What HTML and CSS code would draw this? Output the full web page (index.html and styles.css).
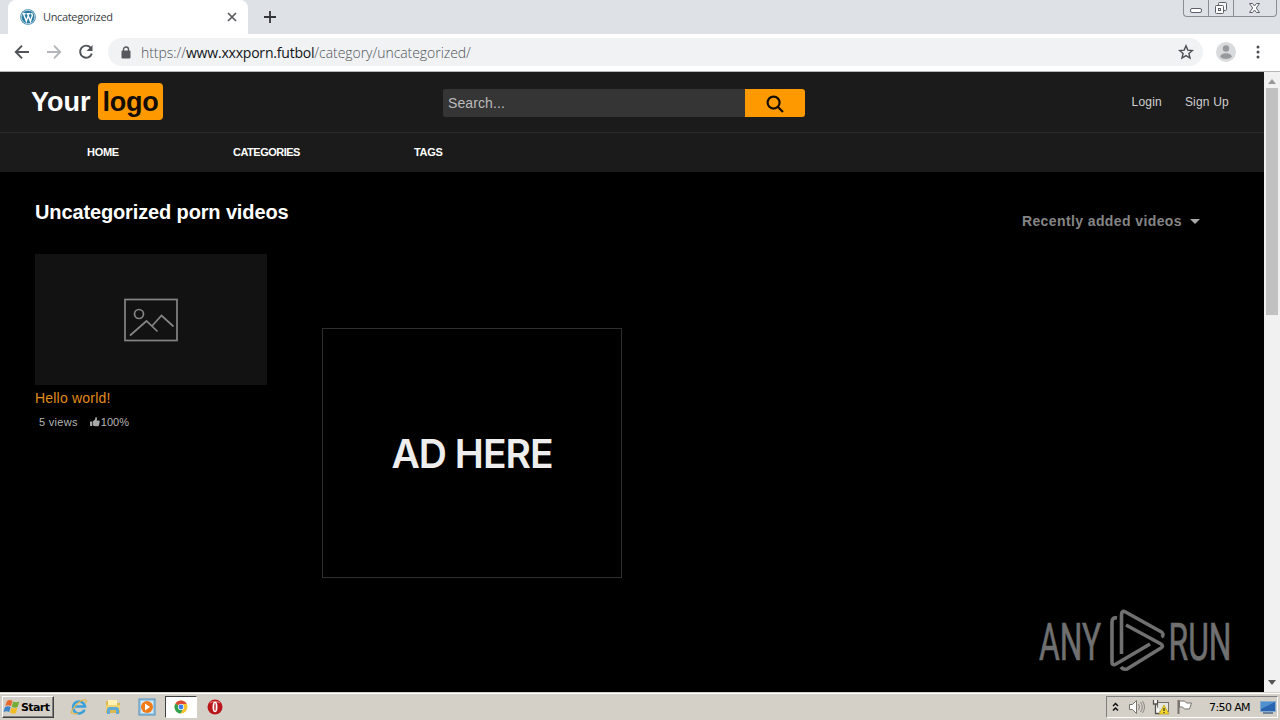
FILE: index.html
```html
<!DOCTYPE html>
<html lang="en">
<head>
<meta charset="utf-8">
<title>Uncategorized</title>
<link rel="stylesheet" href="styles.css">
</head>
<body>
<div class="tabstrip">
  <div class="tab">
    <svg class="favicon" width="16" height="16" viewBox="0 0 16 16"><circle cx="8" cy="8" r="7.8" fill="#2b7ba3"/><circle cx="8" cy="8" r="6.8" fill="none" stroke="#d5e8f1" stroke-width=".8"/><path d="M2.5 4.8h3.2M6.5 4.8h3.8M3.6 5l2.7 7.3L8.2 7M7.6 5l2.8 7.3 1.9-5.7c.2-1.2-.9-1.7-.8-2.6" fill="none" stroke="#fff" stroke-width="1.4"/></svg>
    <span class="tab-title">Uncategorized</span>
    <svg class="tab-close" width="10" height="10" viewBox="0 0 10 10"><path d="M1 1l8 8M9 1L1 9" stroke="#55585c" stroke-width="1.7"/></svg>
  </div>
  <svg class="new-tab" width="12" height="12" viewBox="0 0 12 12"><path d="M6 0v12M0 6h12" stroke="#33363a" stroke-width="1.8"/></svg>
  <div class="window-controls">
    <span class="ctl ctl-min"><svg width="14" height="16" viewBox="0 0 14 16"><rect x="1.5" y="8.500" width="11" height="4" rx="1.500" fill="#fff" stroke="#5b6068"/></svg></span>
    <span class="ctl ctl-max"><svg width="14" height="16" viewBox="0 0 14 16"><rect x="4.500" y="2.500" width="8" height="8" rx="1" fill="#f4f6f8" stroke="#5b6068"/><rect x="1.500" y="5.500" width="8" height="8" rx="1" fill="#fff" stroke="#5b6068"/><rect x="4.500" y="8.500" width="2" height="2" fill="#fff" stroke="#5b6068"/></svg></span>
    <span class="ctl ctl-close"><svg width="14" height="16" viewBox="0 0 14 16"><path d="M1.500 3.500h3L6.500 6l2-2.500h3L8.300 8l3.200 4.500h-3l-2-2.500-2 2.500h-3L4.700 8z" fill="#fff" stroke="#5b6068"/></svg></span>
  </div>
</div>
<div class="toolbar">
  <svg class="nav-icon" width="16" height="16" viewBox="0 0 16 16"><path d="M15 8H2M8 1.700L1.800 8 8 14.300" fill="none" stroke="#505357" stroke-width="1.900"/></svg>
  <svg class="nav-icon" width="16" height="16" viewBox="0 0 16 16"><path d="M1 8h13M8 1.700L14.200 8 8 14.300" fill="none" stroke="#b4b6b9" stroke-width="1.900"/></svg>
  <svg class="nav-icon" width="16" height="16" viewBox="0 0 16 16"><path d="M12.700 3.800A6 6 0 1 0 13.800 9.600" fill="none" stroke="#505357" stroke-width="1.900"/><path d="M14.500 1v6h-6z" fill="#505357"/></svg>
  <div class="omnibox">
    <svg width="10" height="13" viewBox="0 0 10 13"><path d="M2.500 6V3.500a2.500 2.500 0 0 1 5 0V6" fill="none" stroke="#55585c" stroke-width="1.400"/><rect x=".5" y="4.500" width="9" height="8" rx="1" fill="#55585c"/></svg>
    <span class="url">https://<span class="host">www.xxxporn.futbol</span>/category/uncategorized/</span>
    <svg class="star" width="16" height="16" viewBox="0 0 16 16"><path d="M8 1.800l1.800 4.300 4.600.4-3.500 3 1.100 4.500L8 11.600 4 14l1.100-4.500-3.500-3 4.600-.4z" fill="none" stroke="#4b4e52" stroke-width="1.400"/></svg>
  </div>
  <svg class="avatar" width="20" height="20" viewBox="0 0 20 20"><circle cx="10" cy="10" r="10" fill="#d9dadc"/><circle cx="10" cy="6.500" r="3.200" fill="#97999c"/><path d="M4.200 15c0-5 11.600-5 11.600 0-3 2.600-8.600 2.600-11.600 0z" fill="#97999c"/></svg>
  <svg class="kebab" width="4" height="14" viewBox="0 0 4 14"><g fill="#4b4e52"><circle cx="2" cy="2" r="1.500"/><circle cx="2" cy="7" r="1.500"/><circle cx="2" cy="12" r="1.500"/></g></svg>
</div>
<div class="viewport">
  <div class="page">
    <header class="site-header">
      <div class="logo"><span class="logo-a">Your</span><span class="logo-b"><span>logo</span></span></div>
      <div class="search">
        <div class="search-field"><span>Search...</span></div>
        <div class="search-btn"><svg width="18" height="18" viewBox="0 0 18 18"><circle cx="7.600" cy="7.600" r="6" fill="none" stroke="#130d02" stroke-width="2.200"/><path d="M12 12l5 5" stroke="#130d02" stroke-width="2.200"/></svg></div>
      </div>
      <div class="account"><span class="login">Login</span><span class="signup">Sign Up</span></div>
    </header>
    <nav class="menu"><span class="m-home">HOME</span><span class="m-cat">CATEGORIES</span><span class="m-tags">TAGS</span></nav>
    <main class="content">
      <div class="heading-row">
        <h1><span>Uncategorized porn videos</span></h1>
        <div class="sort"><span class="sort-label">Recently added videos</span><i class="caret"></i></div>
      </div>
      <div class="listing">
        <article class="video">
          <div class="thumb"><svg width="54" height="44" viewBox="0 0 54 44"><g fill="none" stroke="#858585" stroke-width="1.700"><rect x="1" y="1.500" width="52" height="41"/><circle cx="15" cy="16" r="4.500"/><path d="M6 37.500L22.500 23l11 10.500M28 28l9.500-10.500L49.500 28.500"/></g></svg></div>
          <div class="video-title"><span>Hello world!</span></div>
          <div class="meta"><span class="views">5 views</span><svg class="thumb-up" width="10" height="10" viewBox="0 0 10 10"><path d="M0 4.500h2V9H0zM2.600 4.500L5 2.500 5.600 0c1.600 0 1.700 1.500 1.100 3.400h2.500c.8.500.7 1.200.3 1.700.3.500.2 1-.2 1.400.1.500 0 .9-.4 1.200 0 1-.5 1.500-1.400 1.500H5.200L2.600 8.600z" fill="#a8a8a8"/></svg><span class="rating">100%</span></div>
        </article>
        <div class="ad"><span>AD HERE</span></div>
      </div>
      <svg class="watermark" width="220" height="80" viewBox="0 0 220 80">
        <g class="watermark-text"><text x="4" y="57" textLength="62" lengthAdjust="spacingAndGlyphs">ANY</text><text x="133.500" y="57" textLength="63" lengthAdjust="spacingAndGlyphs">RUN</text></g>
        <g fill="none" stroke="#707070" stroke-width="3.600" stroke-linejoin="round"><path d="M82 15q-5-1-5 4v40q0 4 4 2l34-20"/><path d="M86.500 51V12q0-5 4-3l36 20q3 3 0 5M91 22l35 19q3 2 0 4L92 66q-4 1-6-2"/></g>
      </svg>
    </main>
  </div>
  <div class="scrollbar"><i class="arrow-up"></i><div class="scroll-thumb"></div><i class="arrow-down"></i></div>
</div>
<footer class="taskbar">
  <div class="start"><svg width="18" height="16" viewBox="0 0 18 16"><path d="M4 2q3-2 5.500 0L8 7Q5 5.500 2.300 7z" fill="#e8672b"/><path d="M10.300 2.500q3 1.600 6 0L14.700 8q-3 1.400-6-.3z" fill="#75ac36"/><path d="M2 8q3-1.600 5.700 0L6.200 13Q3.500 11.500.5 13z" fill="#3d83c7"/><path d="M8.400 8.600q3 1.600 6 .2L13 14q-3 1.500-6-.4z" fill="#f3bd25"/></svg><span>Start</span></div>
  <svg class="task-icon ie" width="18" height="18" viewBox="0 0 18 18"><path d="M14.600 11.800a6 6 0 1 1 .4-3.300H5" fill="none" stroke="#3aa0da" stroke-width="2.500"/><path d="M1.500 15.500C.4 12 10 1 15.500 2c1.200.3 1 2 0 3.500M2 14.500q2 2.500 6 .5" fill="none" stroke="#e4b544" stroke-width="1.200"/></svg>
  <svg class="task-icon folder" width="18" height="18" viewBox="0 0 18 18"><path d="M2 3h6l1 2h7v10H2z" fill="#dcb94f"/><path d="M4 2h9v7H4z" fill="#fff1b4"/><path d="M2 7h14v5H2z" fill="#efd272"/><path d="M3 16v-4q0-3 3-3h6q3 0 3 3v4h-3v-4H6v4z" fill="#5fa9d6"/></svg>
  <svg class="task-icon media" width="18" height="18" viewBox="0 0 18 18"><rect x="1" y="1" width="16" height="16" fill="#9ccae9" stroke="#528fbd"/><rect x="3" y="3" width="12" height="12" fill="#d9edf9"/><circle cx="9" cy="9" r="6" fill="#ef7b19"/><path d="M7 5.500l5 3.500-5 3.500z" fill="#fff"/></svg>
  <div class="active-task"><svg width="14" height="14" viewBox="0 0 14 14"><circle cx="7" cy="7" r="6.500" fill="#f3c42f"/><path d="M7 7L1.400 3.700A6.500 6.500 0 0 1 12.700 4H7z" fill="#dc4935"/><path d="M7 7L1.400 3.700A6.500 6.500 0 0 0 6.500 13.500L9 9z" fill="#30a050"/><circle cx="7" cy="7" r="3.100" fill="#fff"/><circle cx="7" cy="7" r="2.400" fill="#3f7ee8"/></svg></div>
  <svg class="task-icon opera" width="16" height="16" viewBox="0 0 16 16"><circle cx="8" cy="8" r="7.500" fill="#b8161b"/><path d="M3 4a7 5 0 0 1 10 0" fill="none" stroke="#e2686a" stroke-width="1.500"/><ellipse cx="8" cy="8" rx="2.500" ry="5.200" fill="#fff"/><ellipse cx="8" cy="8" rx=".7" ry="4" fill="#b8161b"/></svg>
  <div class="tray">
    <svg class="chev" width="7" height="10" viewBox="0 0 7 10"><path d="M1 4l2.500-2.500L6 4M1 8.500L3.500 6 6 8.500" fill="none" stroke="#111" stroke-width="1.500"/></svg>
    <svg class="tray-icon" width="18" height="16" viewBox="0 0 18 16"><path d="M1.500 5.500h3l4-4v13l-4-4h-3z" fill="#fff" stroke="#77736c"/><path d="M10.500 5q2 3 0 6M12.500 3q3.500 5 0 10M14.500 2q4 6 0 12" fill="none" stroke="#8d8982"/></svg>
    <svg class="tray-icon" width="18" height="16" viewBox="0 0 18 16"><rect x="5.500" y="3.500" width="11" height="9" fill="#e8e6e1" stroke="#77736c"/><path d="M1.500 1v4h4V1M3.500 5v9.500h5" fill="#fff" stroke="#55524d" stroke-width="1.300"/><path d="M12 6l5 9H7z" fill="#f5d62a" stroke="#b69a13" stroke-width=".7"/><path d="M12 9v3M12 13v1" stroke="#333" stroke-width="1.300"/></svg>
    <svg class="tray-icon" width="18" height="16" viewBox="0 0 18 16"><path d="M2.500 1v14" stroke="#77736c" stroke-width="2"/><path d="M3.500 2h5l2 2h5l-2 6h-5l-2-2h-3z" fill="#fff" stroke="#77736c"/></svg>
    <span class="clock">7:50 AM</span>
    <svg class="desktop" width="16" height="14" viewBox="0 0 16 14"><rect x=".5" y="1.500" width="15" height="10" fill="#2865ae" stroke="#87a9ce"/><path d="M1 2h14L1 9z" fill="#4e91ce"/><path d="M3 13h10" stroke="#4b6a8d" stroke-width="1.500"/></svg>
  </div>
</footer>
</body>
</html>
```

FILE: styles.css
```css
* { box-sizing: border-box; }
body { margin: 0; width: 1280px; height: 720px; overflow: hidden; display: flex; flex-direction: column; font-family: "Liberation Sans", Arial, sans-serif; background: #000; white-space: nowrap; }
svg { display: block; flex: none; }

.tabstrip { height: 34px; flex: none; background: #dee1e6; display: flex; align-items: flex-start; padding-left: 8px; }
.tab { width: 240px; height: 34px; background: #fff; border-radius: 8px 8px 0 0; display: flex; align-items: center; padding: 0 11px 0 12px; }
.tab-title { margin: -2px 0 0 7px; font: 11px "Open Sans", sans-serif; color: #3b3e42; letter-spacing: -0.35px; }
.tab-close { margin-left: auto; }
.new-tab { margin: 11px 0 0 16px; }
.window-controls { margin-left: auto; width: 94px; height: 17px; border: 1px solid #888d96; border-top: 0; border-radius: 0 0 4px 4px; display: flex; margin-right: 3px; }
.ctl { display: flex; justify-content: center; border-right: 1px solid #888d96; }
.ctl-min { width: 25px; }
.ctl-max { width: 25px; }
.ctl-close { flex: 1; border-right: 0; }

.toolbar { height: 38px; flex: none; background: #fff; border-bottom: 1px solid #b5b6b8; display: flex; align-items: center; padding: 0 0 1px 14px; }
.nav-icon { margin-right: 16px; }
.omnibox { width: 1095px; height: 28px; margin-left: -2px; border-radius: 14px; background: #f0f2f4; display: flex; align-items: center; padding: 0 9px 0 13px; }
.url { margin-left: 10px; font: 300 14px "Open Sans", sans-serif; color: #505459; letter-spacing: -0.05px; }
.host { color: #111417; font-weight: 400; letter-spacing: -0.2px; }
.star { margin-left: auto; }
.avatar { margin-left: 13px; }
.kebab { margin-left: 20px; }

.viewport { flex: 1; display: flex; min-height: 0; }
.page { width: 1264px; display: flex; flex-direction: column; background: #000; }
.site-header { height: 61px; flex: none; background: #1b1b1b; border-bottom: 1px solid #292929; display: flex; align-items: flex-start; }
.logo { display: flex; width: 443px; padding: 11px 0 0 31px; font-size: 27px; font-weight: bold; line-height: 38px; }
.logo-a { color: #fff; width: 67px; }
.logo-b { width: 65px; height: 37px; background: #f90; color: #130d02; border-radius: 4px; text-align: center; letter-spacing: -0.3px; }
.search { display: flex; width: 362px; height: 28px; margin-top: 17px; }
.search-field { width: 302px; background: #353535; border-radius: 2px 0 0 2px; color: #bbb; font-size: 14px; line-height: 28px; padding-left: 5px; letter-spacing: .1px; }
.search-btn { width: 60px; background: #f90; border-radius: 0 3px 3px 0; display: flex; align-items: center; justify-content: center; padding-top: 1px; }
.account { margin-left: auto; padding: 22px 35px 0 0; display: flex; gap: 23px; font-size: 12px; line-height: 16px; color: #d0d0d0; letter-spacing: .2px; }
.menu { height: 39px; flex: none; background: #1b1b1b; display: flex; padding-left: 87px; font-size: 11px; font-weight: bold; color: #fff; line-height: 39px; letter-spacing: -0.3px; }
.m-home { width: 146px; }
.m-cat { width: 181px; letter-spacing: -0.5px; }

.content { flex: 1; position: relative; padding: 28px 0 0 35px; }
.heading-row { display: flex; justify-content: space-between; height: 54px; padding-right: 64px; }
h1 { margin: 0; font-size: 20px; line-height: 24px; color: #fff; letter-spacing: -0.13px; }
.sort { display: flex; height: 20px; margin-top: 11px; align-items: center; font-size: 14px; font-weight: bold; color: #858585; letter-spacing: .4px; }
.caret { margin-left: 8px; border: 5px solid transparent; border-top-color: #aaa; border-bottom: 0; }
.listing { display: flex; align-items: flex-start; }
.video { width: 232px; }
.thumb { height: 131px; background: #121212; display: flex; align-items: center; justify-content: center; }
.video-title { font-size: 14px; line-height: 26px; color: #e08b1b; letter-spacing: .2px; }
.meta { display: flex; align-items: center; padding-left: 4px; height: 22px; font-size: 11px; color: #b5b5b5; }
.views { letter-spacing: .3px; }
.thumb-up { margin: 0 1px 0 12px; }
.ad { width: 300px; height: 250px; margin: 74px 0 0 55px; border: 1px solid #303030; display: flex; align-items: center; justify-content: center; font: 600 39px Inter, sans-serif; color: #eee; letter-spacing: -1px; }
.watermark { position: absolute; right: 9px; bottom: 9px; }
.watermark-text { fill: #707070; stroke: #707070; stroke-width: .7px; font-family: Roboto, sans-serif; font-size: 52px; }

.scrollbar { width: 16px; background: #f1f1f1; display: flex; flex-direction: column; align-items: center; padding: 7px 0; }
.scroll-thumb { width: 12px; height: 227px; margin-top: 4px; background: #c1c1c1; }
.arrow-up { border: 4px solid transparent; border-bottom: 5px solid #999; border-top: 0; }
.arrow-down { margin-top: auto; border: 4px solid transparent; border-top: 5px solid #555; border-bottom: 0; }

.taskbar { height: 28px; flex: none; background: #d4d0c8; border-top: 1px solid #d4d0c8; box-shadow: inset 0 1px #fff; display: flex; align-items: center; padding: 1px 2px 0; }
.start { width: 52px; height: 22px; display: flex; align-items: center; padding-left: 0; border: 1px solid; border-color: #fff #404040 #404040 #fff; box-shadow: inset -1px -1px #808080; font: bold 11px "DejaVu Sans", sans-serif; color: #000; }
.start span { letter-spacing: -.6px; }
.ie { margin-left: 16px; }
.folder { margin-left: 16px; }
.media { margin-left: 16px; }
.active-task { width: 32px; height: 22px; margin: 0 10px 0 9px; border: 1px solid; border-color: #404040 #fff #fff #404040; background: #fff; display: flex; align-items: center; justify-content: center; }
.tray { width: 172px; height: 22px; margin-left: auto; border: 1px solid; border-color: #808080 #fff #fff #808080; display: flex; align-items: center; padding-left: 5px; }
.chev { margin-right: 9px; }
.tray-icon { margin-right: 6px; }
.clock { margin-left: 9px; width: 51px; font: 11px "DejaVu Sans", sans-serif; letter-spacing: -.6px; color: #000; }
```
